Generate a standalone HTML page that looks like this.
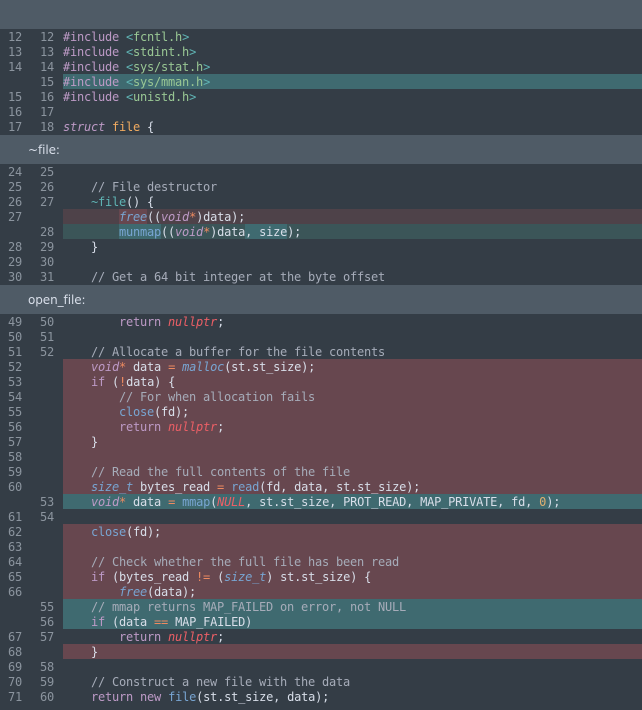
<!DOCTYPE html>
<html><head><meta charset="utf-8">
<style>
html,body{margin:0;padding:0;background:#343d46;}
body{width:642px;height:710px;position:relative;overflow:hidden;font-family:"DejaVu Sans Mono","Liberation Mono",monospace;font-size:12px;letter-spacing:-0.224px;color:#d8dee9;}
.hd{position:absolute;left:0;width:642px;background:#4f5b66;}
.ht{position:absolute;left:28px;font-family:"DejaVu Sans","Liberation Sans",sans-serif;font-size:12px;letter-spacing:-0.08px;line-height:29px;margin-top:1px;color:#d8dee9;white-space:pre;}
.r{position:absolute;left:0;width:642px;height:15px;line-height:15px;white-space:pre;}
.bg{position:absolute;left:63px;right:0;top:0;height:15px;}
.red{background:#67474f;}.tl{background:#3f6a70;}.dred{background:#4e4249;}.dtl{background:#3b5558;}
.a{position:absolute;left:1px;width:21px;text-align:right;color:#8b949e;top:1px;}
.b{position:absolute;left:33px;width:21px;text-align:right;color:#8b949e;top:1px;}
.c{position:absolute;left:63px;top:1px;}
.hr{position:absolute;top:0;height:15px;}
.k{color:#bd9ac6}.i{font-style:italic}.g{color:#99c794}.y{color:#5fb4b4}.o{color:#f0aa60}.p{color:#ee8a60}.n{color:#ec5f66;font-style:italic}.f{color:#78a5d2}.fi{color:#78a5d2;font-style:italic}.m{color:#a6acb9}.d{color:#e0b070}
</style></head><body>
<div class="hd" style="top:0;height:29px"></div>

<div class="r" style="top:29px"><span class="a">12</span><span class="b">12</span><span class="c"><span class="k">#include</span> <span class="y">&lt;</span><span class="g">fcntl.h</span><span class="y">&gt;</span></span></div>
<div class="r" style="top:44px"><span class="a">13</span><span class="b">13</span><span class="c"><span class="k">#include</span> <span class="y">&lt;</span><span class="g">stdint.h</span><span class="y">&gt;</span></span></div>
<div class="r" style="top:59px"><span class="a">14</span><span class="b">14</span><span class="c"><span class="k">#include</span> <span class="y">&lt;</span><span class="g">sys/stat.h</span><span class="y">&gt;</span></span></div>
<div class="r" style="top:74px"><div class="bg tl"></div><span class="b">15</span><span class="c"><span class="k">#include</span> <span class="y">&lt;</span><span class="g">sys/mman.h</span><span class="y">&gt;</span></span></div>
<div class="r" style="top:89px"><span class="a">15</span><span class="b">16</span><span class="c"><span class="k">#include</span> <span class="y">&lt;</span><span class="g">unistd.h</span><span class="y">&gt;</span></span></div>
<div class="r" style="top:104px"><span class="a">16</span><span class="b">17</span></div>
<div class="r" style="top:119px"><span class="a">17</span><span class="b">18</span><span class="c"><span class="k i">struct</span> <span class="o">file</span> {</span></div>

<div class="hd" style="top:135px;height:29px"></div><div class="ht" style="top:135px">~file:</div>

<div class="r" style="top:164px"><span class="a">24</span><span class="b">25</span></div>
<div class="r" style="top:179px"><span class="a">25</span><span class="b">26</span><span class="c"><span class="m">    // File destructor</span></span></div>
<div class="r" style="top:194px"><span class="a">26</span><span class="b">27</span><span class="c">    <span class="y">~file</span>() {</span></div>
<div class="r" style="top:209px"><div class="bg dred"></div><div class="hr red" style="left:119px;width:28px"></div><span class="a">27</span><span class="c">        <span class="fi">free</span>((<span class="k i">void</span><span class="p i">*</span>)data);</span></div>
<div class="r" style="top:224px"><div class="bg dtl"></div><div class="hr tl" style="left:119px;width:42px"></div><div class="hr tl" style="left:245px;width:42px"></div><span class="b">28</span><span class="c">        <span class="f">munmap</span>((<span class="k i">void</span><span class="p i">*</span>)data, size);</span></div>
<div class="r" style="top:239px"><span class="a">28</span><span class="b">29</span><span class="c">    }</span></div>
<div class="r" style="top:254px"><span class="a">29</span><span class="b">30</span></div>
<div class="r" style="top:269px"><span class="a">30</span><span class="b">31</span><span class="c"><span class="m">    // Get a 64 bit integer at the byte offset</span></span></div>

<div class="hd" style="top:285px;height:29px"></div><div class="ht" style="top:285px">open_file:</div>

<div class="r" style="top:314px"><span class="a">49</span><span class="b">50</span><span class="c">        <span class="k">return</span> <span class="n">nullptr</span>;</span></div>
<div class="r" style="top:329px"><span class="a">50</span><span class="b">51</span></div>
<div class="r" style="top:344px"><span class="a">51</span><span class="b">52</span><span class="c"><span class="m">    // Allocate a buffer for the file contents</span></span></div>
<div class="r" style="top:359px"><div class="bg red"></div><span class="a">52</span><span class="c">    <span class="k i">void</span><span class="p i">*</span> data <span class="p">=</span> <span class="fi">malloc</span>(st.st_size);</span></div>
<div class="r" style="top:374px"><div class="bg red"></div><span class="a">53</span><span class="c">    <span class="k">if</span> (<span class="p">!</span>data) {</span></div>
<div class="r" style="top:389px"><div class="bg red"></div><span class="a">54</span><span class="c"><span class="m">        // For when allocation fails</span></span></div>
<div class="r" style="top:404px"><div class="bg red"></div><span class="a">55</span><span class="c">        <span class="f">close</span>(fd);</span></div>
<div class="r" style="top:419px"><div class="bg red"></div><span class="a">56</span><span class="c">        <span class="k">return</span> <span class="n">nullptr</span>;</span></div>
<div class="r" style="top:434px"><div class="bg red"></div><span class="a">57</span><span class="c">    }</span></div>
<div class="r" style="top:449px"><div class="bg red"></div><span class="a">58</span></div>
<div class="r" style="top:464px"><div class="bg red"></div><span class="a">59</span><span class="c"><span class="m">    // Read the full contents of the file</span></span></div>
<div class="r" style="top:479px"><div class="bg red"></div><span class="a">60</span><span class="c">    <span class="fi">size_t</span> bytes_read <span class="p">=</span> <span class="f">read</span>(fd, data, st.st_size);</span></div>
<div class="r" style="top:494px"><div class="bg tl"></div><span class="b">53</span><span class="c">    <span class="k i">void</span><span class="p i">*</span> data <span class="p">=</span> <span class="f">mmap</span>(<span class="n">NULL</span>, st.st_size, PROT_READ, MAP_PRIVATE, fd, <span class="d">0</span>);</span></div>
<div class="r" style="top:509px"><span class="a">61</span><span class="b">54</span></div>
<div class="r" style="top:524px"><div class="bg red"></div><span class="a">62</span><span class="c">    <span class="f">close</span>(fd);</span></div>
<div class="r" style="top:539px"><div class="bg red"></div><span class="a">63</span></div>
<div class="r" style="top:554px"><div class="bg red"></div><span class="a">64</span><span class="c"><span class="m">    // Check whether the full file has been read</span></span></div>
<div class="r" style="top:569px"><div class="bg red"></div><span class="a">65</span><span class="c">    <span class="k">if</span> (bytes_read <span class="p">!=</span> (<span class="fi">size_t</span>) st.st_size) {</span></div>
<div class="r" style="top:584px"><div class="bg red"></div><span class="a">66</span><span class="c">        <span class="fi">free</span>(data);</span></div>
<div class="r" style="top:599px"><div class="bg tl"></div><span class="b">55</span><span class="c"><span class="m">    // mmap returns MAP_FAILED on error, not NULL</span></span></div>
<div class="r" style="top:614px"><div class="bg tl"></div><span class="b">56</span><span class="c">    <span class="k">if</span> (data <span class="p">==</span> MAP_FAILED)</span></div>
<div class="r" style="top:629px"><span class="a">67</span><span class="b">57</span><span class="c">        <span class="k">return</span> <span class="n">nullptr</span>;</span></div>
<div class="r" style="top:644px"><div class="bg red"></div><span class="a">68</span><span class="c">    }</span></div>
<div class="r" style="top:659px"><span class="a">69</span><span class="b">58</span></div>
<div class="r" style="top:674px"><span class="a">70</span><span class="b">59</span><span class="c"><span class="m">    // Construct a new file with the data</span></span></div>
<div class="r" style="top:689px"><span class="a">71</span><span class="b">60</span><span class="c">    <span class="k">return</span> <span class="k">new</span> <span class="f">file</span>(st.st_size, data);</span></div>
</body></html>
